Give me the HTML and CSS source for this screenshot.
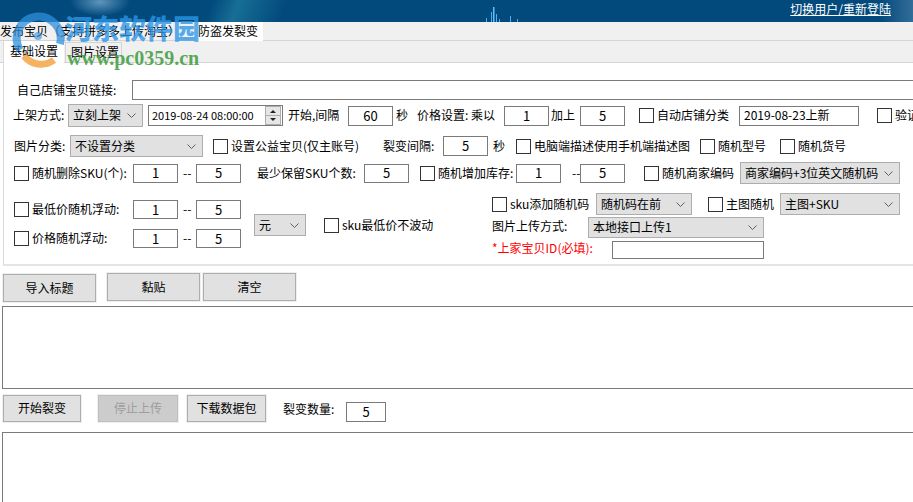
FILE: index.html
```html
<!DOCTYPE html>
<html lang="zh-CN">
<head>
<meta charset="utf-8">
<title>防盗发裂变</title>
<link rel="stylesheet" href="styles.css">
</head>
<body>
<div class="banner">
  <svg class="banner-deco" width="913" height="22" viewBox="0 0 913 22">
    <rect x="486" y="18" width="1" height="4" fill="#4ab0f0"/>
    <rect x="491" y="12" width="1" height="10" fill="#4ab0f0"/>
    <rect x="493" y="7" width="1.5" height="15" fill="#5fc0ff"/>
    <rect x="496" y="14" width="1" height="8" fill="#4ab0f0"/>
    <rect x="499" y="19" width="1" height="3" fill="#4ab0f0"/>
    <rect x="510" y="16" width="1" height="6" fill="#4ab0f0"/>
    <rect x="517" y="19" width="1" height="3" fill="#4ab0f0"/>
  </svg>
  <a class="switch-user" href="#">切换用户/重新登陆</a>
</div>

<div class="tabs1">
  <span class="tab1">发布宝贝（支持拼多多上传淘宝）</span>
  <span class="tab1 active">防盗发裂变</span>
</div>
<div class="tabs2">
  <span class="tab2 active">基础设置</span>
  <span class="tab2">图片设置</span>
</div>

<div class="panel">
  <div class="row r1">
    <span class="lbl ml13 w115">自己店铺宝贝链接:</span>
    <span class="inp w800"></span>
  </div>

  <div class="row r2">
    <span class="lbl ml9 w55">上架方式:</span>
    <span class="sel w75 h23">立刻上架<svg class="chev" width="9" height="5" viewBox="0 0 9 5"><polyline points="0.5,0.5 4.5,4.5 8.5,0.5"/></svg></span>
    <span class="date ml5">2019-08-24 08:00:00<svg class="spin" width="16" height="19" viewBox="0 0 16 19"><rect x="0.5" y="0.5" width="15" height="18" fill="#e6e6e6" stroke="#adadad"/><line x1="1" y1="9.5" x2="15" y2="9.5" stroke="#adadad"/><polygon points="5,7 11,7 8,4" fill="#222"/><polygon points="5,12 11,12 8,15" fill="#222"/></svg></span>
    <span class="lbl ml5 w60">开始,间隔</span>
    <span class="inp w45">60</span>
    <span class="lbl ml3 w21">秒</span>
    <span class="lbl w87">价格设置: 乘以</span>
    <span class="inp w45">1</span>
    <span class="lbl ml2 w29">加上</span>
    <span class="inp w45">5</span>
    <span class="chk ml14 w100">自动店铺分类</span>
    <span class="inp w120 left">2019-08-23上新</span>
    <span class="chk ml18">验证</span>
  </div>

  <div class="row r3">
    <span class="lbl ml10 w56">图片分类:</span>
    <span class="sel w133">不设置分类<svg class="chev" width="9" height="5" viewBox="0 0 9 5"><polyline points="0.5,0.5 4.5,4.5 8.5,0.5"/></svg></span>
    <span class="chk ml10 w170">设置公益宝贝(仅主账号)</span>
    <span class="lbl w60">裂变间隔:</span>
    <span class="inp w45">5</span>
    <span class="lbl ml5 w23">秒</span>
    <span class="chk w184">电脑端描述使用手机端描述图</span>
    <span class="chk w80">随机型号</span>
    <span class="chk">随机货号</span>
  </div>

  <div class="row r4">
    <span class="chk ml10 w119">随机删除SKU(个):</span>
    <span class="inp w45 h19">1</span>
    <span class="dash w18 pl5">--</span>
    <span class="inp w45 h19">5</span>
    <span class="lbl ml16 w107">最少保留SKU个数:</span>
    <span class="inp w45 h19">5</span>
    <span class="chk ml11 w96">随机增加库存:</span>
    <span class="inp w45 h19">1</span>
    <span class="dash w19 pl11">--</span>
    <span class="inp w45 h19">5</span>
    <span class="chk ml19 w96">随机商家编码</span>
    <span class="sel w160">商家编码+3位英文随机码<svg class="chev" width="9" height="5" viewBox="0 0 9 5"><polyline points="0.5,0.5 4.5,4.5 8.5,0.5"/></svg></span>
  </div>

  <div class="lower">
    <div class="lcol">
      <div class="row lrow-a">
        <span class="chk w119">最低价随机浮动:</span>
        <span class="inp w45 h19">1</span>
        <span class="dash w18 pl5">--</span>
        <span class="inp w45 h19">5</span>
      </div>
      <div class="row lrow-b">
        <span class="chk w119">价格随机浮动:</span>
        <span class="inp w45 h19">1</span>
        <span class="dash w18 pl5">--</span>
        <span class="inp w45 h19">5</span>
      </div>
    </div>
    <span class="sel unit">元<svg class="chev" width="9" height="5" viewBox="0 0 9 5"><polyline points="0.5,0.5 4.5,4.5 8.5,0.5"/></svg></span>
    <span class="chk nofloat">sku最低价不波动</span>
    <div class="rcol">
      <div class="row rrow-a">
        <span class="chk w104">sku添加随机码</span>
        <span class="sel w96">随机码在前<svg class="chev" width="9" height="5" viewBox="0 0 9 5"><polyline points="0.5,0.5 4.5,4.5 8.5,0.5"/></svg></span>
        <span class="chk ml16 w72">主图随机</span>
        <span class="sel w120">主图+SKU<svg class="chev" width="9" height="5" viewBox="0 0 9 5"><polyline points="0.5,0.5 4.5,4.5 8.5,0.5"/></svg></span>
      </div>
      <div class="row rrow-b">
        <span class="lbl w96 up">图片上传方式:</span>
        <span class="sel w176 h21">本地接口上传1<svg class="chev" width="9" height="5" viewBox="0 0 9 5"><polyline points="0.5,0.5 4.5,4.5 8.5,0.5"/></svg></span>
      </div>
      <div class="row rrow-c">
        <span class="lbl w120 red">*上家宝贝ID(必填):</span>
        <span class="inp w152 h18"></span>
      </div>
    </div>
  </div>
</div>

<div class="btns1">
  <span class="btn ml3 w93 low">导入标题</span>
  <span class="btn ml11 w93">黏贴</span>
  <span class="btn ml3 w93">清空</span>
</div>
<div class="log log1"></div>

<div class="btns2">
  <span class="btn ml3 w78">开始裂变</span>
  <span class="btn disabled ml17 w80">停止上传</span>
  <span class="btn ml9 w79">下载数据包</span>
  <span class="lbl ml17 w63 cnt-lbl">裂变数量:</span>
  <span class="inp w40 cnt">5</span>
</div>
<div class="log log2"></div>

<div class="watermark">
  <svg class="wm-logo" width="60" height="60" viewBox="0 0 60 60">
    <path d="M12 40 A22 22 0 1 1 52 34" fill="none" stroke="#2f8fdc" stroke-width="8" opacity="0.75"/>
    <path d="M16 46 A22 22 0 0 0 46 50" fill="none" stroke="#f29a2e" stroke-width="7" opacity="0.75"/>
    <circle cx="30" cy="26" r="4" fill="#2f8fdc" opacity="0.6"/>
  </svg>
  <span class="wm-cn">河东软件园</span>
  <span class="wm-url">www.pc0359.cn</span>
</div>
</body>
</html>
```

FILE: styles.css
```css
* { box-sizing: border-box; }
html, body { margin: 0; padding: 0; overflow: hidden; }
body {
  width: 913px;
  height: 502px;
  position: relative;
  background: #fff;
  color: #000;
  font-family: "Noto Sans CJK SC", "Noto Sans", sans-serif;
  font-size: 12px;
  line-height: 1.2;
}

/* banner */
.banner {
  position: relative;
  height: 22px;
  display: flex;
  justify-content: flex-end;
  align-items: center;
  padding-right: 22px;
  background:
    radial-gradient(ellipse 30px 14px at 100px 2px, rgba(170,210,240,0.55), rgba(170,210,240,0) 100%),
    linear-gradient(110deg, rgba(0,0,0,0) 200px, rgba(40,140,170,0.55) 225px, rgba(0,0,0,0) 270px),
    linear-gradient(90deg, rgba(0,0,0,0) 880px, rgba(110,150,190,0.45) 913px),
    #024a7c;
}
.banner-deco { position: absolute; left: 0; top: 0; }
.switch-user {
  position: relative;
  color: #fff;
  text-decoration: underline;
  font-size: 12px;
  line-height: 14px;
  margin-top: -4px;
}

/* tabs */
.tabs1 {
  height: 19px;
  display: flex;
  background: #f0f0f0;
  border-bottom: 1px solid #d4d4d4;
}
.tab1 {
  width: 195px;
  line-height: 18px;
  white-space: nowrap;
  overflow: hidden;
}
.tab1.active {
  width: 68px;
  height: 19px;
  padding-left: 3px;
  background: #fff;
}
.tabs2 {
  height: 22px;
  display: flex;
  align-items: flex-end;
  padding-left: 3px;
  background: #f0f0f0;
  border-bottom: 1px solid #d4d4d4;
}
.tab2 {
  width: 57px;
  height: 20px;
  margin-left: 1px;
  padding-left: 5px;
  line-height: 18px;
  border: 1px solid #d4d4d4;
  border-bottom: none;
  background: #f0f0f0;
}
.tab2.active {
  width: 61px;
  height: 22px;
  margin-left: 0;
  margin-bottom: -1px;
  padding-left: 6px;
  line-height: 20px;
  border: none;
  border-left: 1px solid #d9d9d9;
  background: #fff;
}

/* panel */
.panel {
  height: 203px;
  margin-left: 3px;
  padding-top: 17px;
  border-left: 1px solid #d9d9d9;
  border-bottom: 2px solid #e4e4e4;
  background: #fff;
  overflow: hidden;
}
.row {
  display: flex;
  align-items: center;
  white-space: nowrap;
}
.r1 { height: 20px; }
.r2 { height: 23px; margin-top: 4px; }
.r3 { height: 22px; margin-top: 8px; }
.r4 { height: 22px; margin-top: 5px; }
.lower {
  display: flex;
  align-items: flex-start;
  height: 66px;
  margin-top: 9px;
  white-space: nowrap;
}
.lcol { flex: none; width: 227px; margin-left: 10px; }
.lrow-a { height: 19px; margin-top: 7px; }
.lrow-b { height: 19px; margin-top: 10px; }
.unit { width: 52px; height: 21px; margin-left: 13px; margin-top: 21px; }
.nofloat { width: 168px; height: 14px; margin-left: 18px; margin-top: 25px; }
.rcol { flex: none; width: 420px; }
.rrow-a { height: 22px; }
.rrow-b { height: 21px; margin-top: 2px; }
.rrow-c { height: 18px; margin-top: 3px; }

/* controls */
.lbl { flex: none; display: inline-block; }
.up { margin-top: -3px; }
.red { color: #ff0000; margin-top: -3px; }
.inp {
  flex: none;
  height: 20px;
  display: flex;
  align-items: center;
  justify-content: center;
  border: 1px solid #7a7a7a;
  background: #fff;
  font-size: 13px;
}
.inp.left { justify-content: flex-start; padding-left: 4px; font-size: 12px; }
.sel {
  flex: none;
  height: 22px;
  display: flex;
  align-items: center;
  padding-left: 4px;
  border: 1px solid #adadad;
  background: #e1e1e1;
  font-size: 12px;
}
.chev {
  flex: none;
  margin-left: auto;
  margin-right: 6px;
  fill: none;
  stroke: #606060;
  stroke-width: 1;
}
.date {
  flex: none;
  width: 135px;
  height: 21px;
  display: flex;
  align-items: center;
  padding-left: 3px;
  border: 1px solid #7a7a7a;
  background: #fff;
  font-size: 11px;
}
.spin { flex: none; margin-left: auto; margin-right: 1px; }
.chk {
  flex: none;
  display: flex;
  align-items: center;
  font-size: 12px;
}
.chk::before {
  content: "";
  flex: none;
  width: 13px;
  height: 13px;
  margin-right: 3px;
  border: 1px solid #333;
  background: #fff;
}
.dash { flex: none; display: inline-block; }

/* buttons and logs */
.btns1 { display: flex; height: 28px; margin-top: 7px; }
.btns2 { display: flex; align-items: flex-start; height: 27px; margin-top: 6px; }
.btn {
  flex: none;
  height: 100%;
  display: flex;
  align-items: center;
  justify-content: center;
  border: 1px solid #adadad;
  background: #e1e1e1;
  box-shadow: 0 0 0 1px #efefef;
  font-size: 12px;
}
.btn.low { margin-top: 1px; height: 28px; }
.btn.disabled { background: #cccccc; border-color: #bfbfbf; color: #9d9d9d; }
.cnt-lbl { line-height: 27px; font-size: 12px; }
.cnt { margin-top: 7px; }
.log {
  width: 930px;
  margin-left: 2px;
  border: 1px solid #7a7a7a;
  background: #fff;
}
.log1 { height: 83px; margin-top: 5px; }
.log2 { height: 100px; margin-top: 10px; }

/* sizes */
.w18 { width: 18px; } .w19 { width: 19px; } .w21 { width: 21px; } .w23 { width: 23px; }
.w29 { width: 29px; } .w40 { width: 40px; } .w45 { width: 45px; } .w55 { width: 55px; }
.w56 { width: 56px; } .w60 { width: 60px; } .w63 { width: 63px; } .w72 { width: 72px; }
.w75 { width: 75px; } .w78 { width: 78px; } .w79 { width: 79px; } .w80 { width: 80px; }
.w87 { width: 87px; } .w93 { width: 93px; } .w96 { width: 96px; } .w100 { width: 100px; }
.w104 { width: 104px; } .w107 { width: 107px; } .w115 { width: 115px; } .w119 { width: 119px; }
.w120 { width: 120px; } .w133 { width: 133px; } .w152 { width: 152px; } .w160 { width: 160px; }
.w170 { width: 170px; } .w176 { width: 176px; } .w184 { width: 184px; } .w800 { width: 800px; }
.h18 { height: 18px; } .h19 { height: 19px; } .h21 { height: 21px; } .h23 { height: 23px; }
.ml2 { margin-left: 2px; } .ml3 { margin-left: 3px; } .ml5 { margin-left: 5px; }
.ml9 { margin-left: 9px; } .ml10 { margin-left: 10px; } .ml11 { margin-left: 11px; }
.ml13 { margin-left: 13px; } .ml14 { margin-left: 14px; } .ml16 { margin-left: 16px; }
.ml17 { margin-left: 17px; } .ml18 { margin-left: 18px; } .ml19 { margin-left: 19px; }
.pl5 { padding-left: 5px; } .pl11 { padding-left: 11px; }

/* watermark overlay */
.watermark {
  position: absolute;
  left: 0;
  top: 0;
  width: 210px;
  height: 70px;
  pointer-events: none;
}
.wm-logo { position: absolute; left: 8px; top: 10px; }
.wm-cn {
  position: absolute;
  left: 65px;
  top: 10px;
  font-family: "Noto Sans CJK SC", sans-serif;
  font-size: 27px;
  font-weight: 900;
  line-height: 36px;
  color: rgba(44, 150, 232, 0.8);
  white-space: nowrap;
}
.wm-url {
  position: absolute;
  left: 67px;
  top: 47px;
  font-family: "Liberation Serif", serif;
  font-size: 20px;
  font-weight: bold;
  line-height: 22px;
  color: rgba(60, 155, 60, 0.85);
  white-space: nowrap;
}
```
